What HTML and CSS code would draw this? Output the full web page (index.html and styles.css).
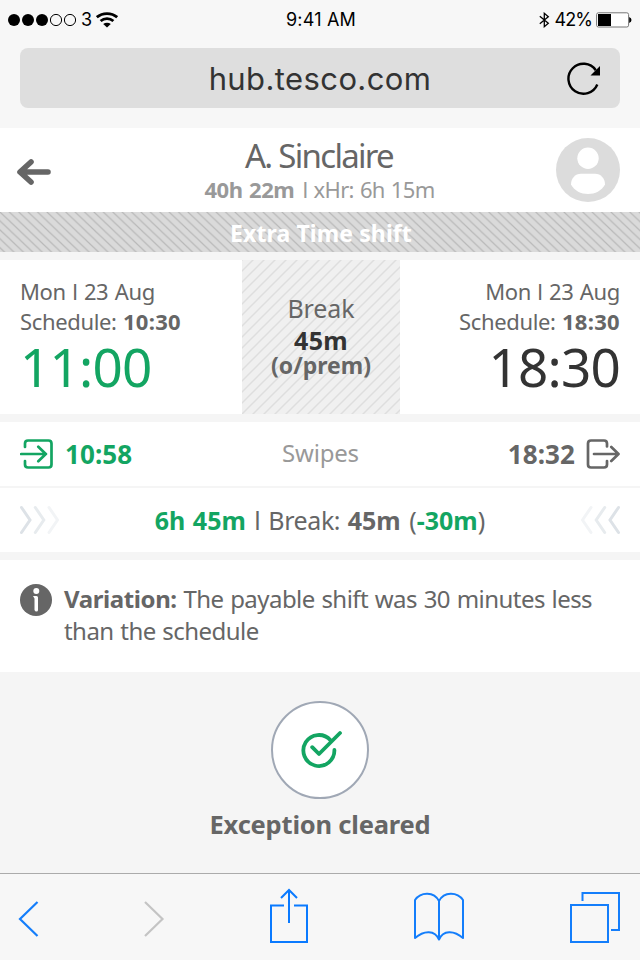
FILE: index.html
```html
<!DOCTYPE html>
<html lang="en">
<head>
<meta charset="utf-8">
<title>Shift details</title>
<link rel="stylesheet" href="styles.css">
</head>
<body>
<div class="screen">
  <header class="chrome">
    <div class="status">
      <div class="signal">
        <svg width="70" height="14" viewBox="0 0 70 14"><circle cx="6" cy="7" r="6"/><circle cx="20" cy="7" r="6"/><circle cx="34" cy="7" r="6"/><g fill="none" stroke="#000"><circle cx="48" cy="7" r="5.6"/><circle cx="62" cy="7" r="5.6"/></g></svg>
        <span class="carrier">3</span>
        <svg class="wifi" width="22" height="16" viewBox="0 0 22 16"><g fill="none" stroke="#000" stroke-width="2.8"><path d="M.8 5.2C6.5.3 15.5.3 21.2 5.2"/><path d="M4.6 9C8.3 5.8 13.7 5.8 17.4 9"/></g><path d="M7.2 11.9C9.4 10.2 12.6 10.2 14.8 11.9L11 15.6Z"/></svg>
      </div>
      <span class="clock">9:41 AM</span>
      <div class="power">
        <svg width="11" height="16" viewBox="0 0 11 16" fill="none" stroke="#000" stroke-width="1.3"><path d="M.8 4.3 9.3 11.3 5.3 14.7V1.3L9.3 4.7.8 11.7"/></svg>
        <span class="percent">42%</span>
        <svg width="36" height="16" viewBox="0 0 36 16"><rect x=".6" y=".8" width="32" height="14.2" rx="1.8" fill="#fff" stroke="#777"/><rect x="2" y="2" width="13" height="12"/><path d="M33.2 5Q35.5 6 35.5 8T33.2 11Z"/></svg>
      </div>
    </div>
    <div class="address">
      <span class="host">hub.tesco.com</span>
      <svg class="reload" width="34" height="34" viewBox="0 0 34 34"><path d="M30.300 22.500A15 15 0 1 1 28.800 8.200" fill="none" stroke="#000" stroke-width="2.400"/><path d="M33 4V13.500H23.500Z"/></svg>
    </div>
  </header>

  <section class="person">
    <svg class="back" width="36" height="28" viewBox="0 0 36 28" fill="none" stroke="#666" stroke-width="5.6" stroke-linecap="round" stroke-linejoin="round"><path d="M15 4 4 14 15 24M5 14H32"/></svg>
    <div class="who">
      <h1>A. Sinclaire</h1>
      <p><b>40h 22m</b><span class="extra">l xHr: 6h 15m</span></p>
    </div>
    <svg class="avatar" width="64" height="64" viewBox="0 0 64 64"><circle cx="32" cy="32" r="32" fill="#dcdcdc"/><circle cx="32" cy="20.3" r="10.7" fill="#fff"/><path d="M25 35.7H39C45 35.7 49 40.5 49 46.5C45.5 53 39 56 32 56S18.500 53 15 46.500C15 40.500 19 35.700 25 35.700Z" fill="#fff"/></svg>
  </section>

  <div class="banner"><svg class="hatch" width="640" height="40"><defs><pattern id="back-slash" width="9.4" height="9.4" patternUnits="userSpaceOnUse" patternTransform="skewX(3)"><path d="M-2-2 11.400 11.400M-2 7.400 2 11.400M7.400-2 11.400 2" stroke="#b8b8b8" stroke-width="1.200"/></pattern></defs><rect width="640" height="40" fill="url(#back-slash)"/></svg><span>Extra Time shift</span></div>

  <section class="times">
    <div class="time start">
      <p class="date">Mon l 23 Aug</p>
      <p class="date">Schedule: <b>10:30</b></p>
      <p class="big">11:00</p>
    </div>
    <div class="break"><svg class="hatch" width="158" height="154"><defs><pattern id="slash" width="11" height="11" patternUnits="userSpaceOnUse"><path d="M-2 13 13-2M-2 2 2-2M9 13 13 9" stroke="#dedede" stroke-width="1.500"/></pattern></defs><rect width="158" height="154" fill="url(#slash)"/></svg>
      <p class="label">Break</p>
      <p class="length">45m</p>
      <p class="premium">(o/prem)</p>
    </div>
    <div class="time end">
      <p class="date">Mon l 23 Aug</p>
      <p class="date">Schedule: <b>18:30</b></p>
      <p class="big">18:30</p>
    </div>
  </section>

  <section class="row swipes">
    <div class="swipe in">
      <svg width="34" height="32" viewBox="0 0 34 32" fill="none" stroke="#13a562" stroke-width="2.700" stroke-linecap="round" stroke-linejoin="round"><path d="M5 9V5.500Q5 2.500 8 2.500H28.500Q31.500 2.500 31.500 5.500V26.500Q31.500 29.500 28.500 29.500H8Q5 29.500 5 26.500V23M1.200 16H26M18.300 8.700 25.800 16 18.300 23.300"/></svg>
      <b>10:58</b>
    </div>
    <span class="caption">Swipes</span>
    <div class="swipe out">
      <b>18:32</b>
      <svg width="34" height="32" viewBox="0 0 34 32" fill="none" stroke="#666" stroke-width="2.700" stroke-linecap="round" stroke-linejoin="round"><path d="M21 8.500V5.500Q21 2.500 18 2.500H5Q2 2.500 2 5.500V26.500Q2 29.500 5 29.500H18Q21 29.500 21 26.500V23M8 16H32.300M25.300 9 32.500 16 25.300 23"/></svg>
    </div>
  </section>

  <section class="row total">
    <svg width="40" height="30" viewBox="0 0 40 30" fill="none" stroke-width="3" stroke-linecap="round"><path d="M1.500 2.500 10 15 1.500 27.500" stroke="#dde2e7"/><path d="M15.300 2.500 23.800 15 15.300 27.500" stroke="#e7ebee"/><path d="M29 2.500 37.500 15 29 27.500" stroke="#f2f4f6"/></svg>
    <p><b class="green worked">6h 45m</b> l <span class="tight">Break:</span> <b>45m</b> <span class="delta">(<b class="green">-30m</b>)</span></p>
    <svg width="40" height="30" viewBox="0 0 40 30" fill="none" stroke-width="3" stroke-linecap="round"><path d="M38.500 2.500 30 15 38.500 27.500" stroke="#dde2e7"/><path d="M24.700 2.500 16.200 15 24.700 27.500" stroke="#e7ebee"/><path d="M11 2.500 2.500 15 11 27.500" stroke="#f2f4f6"/></svg>
  </section>

  <section class="note">
    <svg width="32" height="32" viewBox="0 0 32 32"><circle cx="16" cy="16" r="16" fill="#666"/><circle cx="16.300" cy="7" r="3" fill="#fff"/><path d="M13 12H16.500Q18 12 18 13.500V26Q18 27.500 16.500 27.500T14.500 26V14.500Z" fill="#fff"/></svg>
    <p><b>Variation:</b> The payable shift was 30 minutes less<br>than the schedule</p>
  </section>

  <section class="cleared">
    <div class="disc">
      <svg width="44" height="42" viewBox="0 0 44 42" fill="none" stroke="#13a562" stroke-width="3.800" stroke-linecap="round" stroke-linejoin="round"><path d="M35.400 22A15.500 15.500 0 1 1 31.500 12.200M13.200 19.200 20 26 41 5"/></svg>
    </div>
    <p>Exception cleared</p>
  </section>

  <nav class="toolbar">
    <svg class="prev" width="24" height="40" viewBox="0 0 24 40" fill="none" stroke="#147efb" stroke-width="2.200"><path d="M20.500 3 3 20 20.500 37"/></svg>
    <svg class="next" width="24" height="40" viewBox="0 0 24 40" fill="none" stroke="#c4c4c4" stroke-width="2.200"><path d="M2 3 19.500 20 2 37"/></svg>
    <svg class="share" width="38" height="56" viewBox="0 0 38 56" fill="none" stroke="#0a7aff" stroke-width="2"><path d="M14 17.500H1V54H37V17.500H24M19 35V2M11 10 19 2 27 10"/></svg>
    <svg class="book" width="50" height="50" viewBox="0 0 50 50" fill="none" stroke="#147efb" stroke-width="2" stroke-linejoin="round"><path d="M25 9C20-.5 7-.5 1 8V46C10 38 21 38 25 47.500C29 38 40 38 49 46V8C43-.5 30-.5 25 9V48"/></svg>
    <svg class="tabs" width="50" height="52" viewBox="0 0 50 52" fill="none" stroke="#147efb" stroke-width="2"><path d="M1 14H38V51H1ZM12.500 10V2H49V39H41"/></svg>
  </nav>
</div>
</body>
</html>
```
FILE: styles.css
```css
* { box-sizing: border-box; }
body { margin: 0; }
h1, p { margin: 0; font-weight: 400; }
svg { display: block; flex: none; }

.screen {
  width: 640px;
  height: 960px;
  display: flex;
  flex-direction: column;
  overflow: hidden;
  background: #f5f5f5;
  color: #666;
  font-family: "Noto Sans", sans-serif;
  white-space: nowrap;
}

/* Browser chrome */
.chrome { height: 128px; background: #f7f7f7; font-family: Inter, sans-serif; }
.status {
  height: 48px;
  padding: 0 8px 8px;
  display: grid;
  grid-template-columns: 1fr auto 1fr;
  align-items: center;
  color: #000;
  font-size: 18px;
}
.status span { padding-bottom: 1px; }
.signal, .power { display: flex; align-items: center; }
.signal { gap: 3px; }
.carrier { width: 12px; }
.wifi { margin: 0; }
.clock { letter-spacing: 0.2px; margin-left: 2px; }
.power { justify-content: flex-end; gap: 4px; }
.percent { letter-spacing: -0.9px; }
.address {
  height: 60px;
  margin: 0 20px;
  padding: 0 19px;
  display: grid;
  grid-template-columns: 34px 1fr 34px;
  align-items: center;
  border-radius: 8px;
  background: #dedede;
  color: #333;
}
.host { grid-column: 2; text-align: center; font-size: 31px; line-height: 62px; letter-spacing: 0.4px; }

/* Colleague */
.person { height: 84px; padding: 0 20px 0 16px; display: grid; grid-template-columns: 64px 1fr 64px; background: #fff; }
.back { margin-top: 30px; }
.who { padding-top: 8px; text-align: center; }
.who h1 { margin-left: 2px; font-size: 33px; line-height: 40px; letter-spacing: -1.7px; }
.who p { margin: -1px 0 0 3px; display: flex; justify-content: center; gap: 8px; font-size: 22px; line-height: 28px; color: #999; }
.who b { letter-spacing: -0.4px; word-spacing: 1px; }
.extra { letter-spacing: -0.65px; word-spacing: 1px; }
.avatar { margin-top: 10px; }

.banner { position: relative; height: 40px; background: #dadada; color: #fff; text-align: center; font-size: 23px; line-height: 42px; font-weight: 700; letter-spacing: 0.1px; }
.banner span { position: relative; margin-left: 2px; }
.hatch { position: absolute; inset: 0; }

/* Shift times */
.times { height: 154px; margin: 8px 0; display: grid; grid-template-columns: 242px 158px 240px; background: #fff; }
.time { padding: 16px 20px 0; }
.end { text-align: right; }
.date { font-size: 22px; line-height: 30px; letter-spacing: -0.35px; word-spacing: 1px; }
.date b { letter-spacing: 0.3px; }
.big { margin-top: 4px; font-size: 53px; line-height: 54px; letter-spacing: -0.8px; color: #333; }
.start .big { color: #13a562; }
.break { position: relative; padding-top: 32px; background: #f0f0f0; text-align: center; }
.break p { position: relative; }
.label { font-size: 25px; line-height: 32px; letter-spacing: -0.1px; }
.length { font-size: 25px; line-height: 32px; font-weight: 700; letter-spacing: 0.3px; color: #333; }
.premium { margin-top: -3px; font-size: 23px; line-height: 24px; font-weight: 700; }

/* Rows */
.row { height: 64px; padding: 0 20px; display: grid; align-items: center; background: #fff; font-size: 26px; line-height: 64px; }
.swipes { grid-template-columns: 1fr auto 1fr; }
.swipe { display: flex; align-items: center; gap: 11px; letter-spacing: 0.1px; }
.in { color: #13a562; }
.out { justify-content: flex-end; }
.caption { margin-left: 1px; font-size: 24px; line-height: 60px; padding-bottom: 2px; letter-spacing: -0.2px; color: #999; }
.total { margin: 2px 0 8px; grid-template-columns: 40px 1fr 40px; text-align: center; font-size: 25px; letter-spacing: 0; word-spacing: 1px; }
.worked { margin-right: 1px; }
.tight { letter-spacing: -0.4px; }
.delta { margin-left: 1px; }
.green { color: #13a562; }

.note { height: 112px; padding: 23px 20px 0; display: flex; gap: 12px; background: #fff; font-size: 24px; line-height: 32px; letter-spacing: -0.55px; word-spacing: 1px; }
.note svg { margin-top: 1px; }
.note b { letter-spacing: -0.4px; }

/* Outcome */
.cleared { flex: 1; padding-top: 29px; display: flex; flex-direction: column; align-items: center; font-size: 25.5px; line-height: 30px; letter-spacing: -0.2px; }
.cleared p { font-weight: 700; }
.disc { width: 98px; height: 98px; margin-bottom: 10px; padding: 0 0 2px 2px; display: flex; align-items: center; justify-content: center; border: 2px solid #a0a8b5; border-radius: 50%; background: #fff; }

.toolbar { height: 87px; padding: 0 20px 0 17px; display: flex; align-items: center; border-top: 1px solid #ababab; background: #f7f7f7; }
.prev, .next { margin-top: 3px; }
.next { margin-left: 102px; }
.share { margin: -2px 106px 0 103px; }
.tabs { margin-left: auto; }
```
